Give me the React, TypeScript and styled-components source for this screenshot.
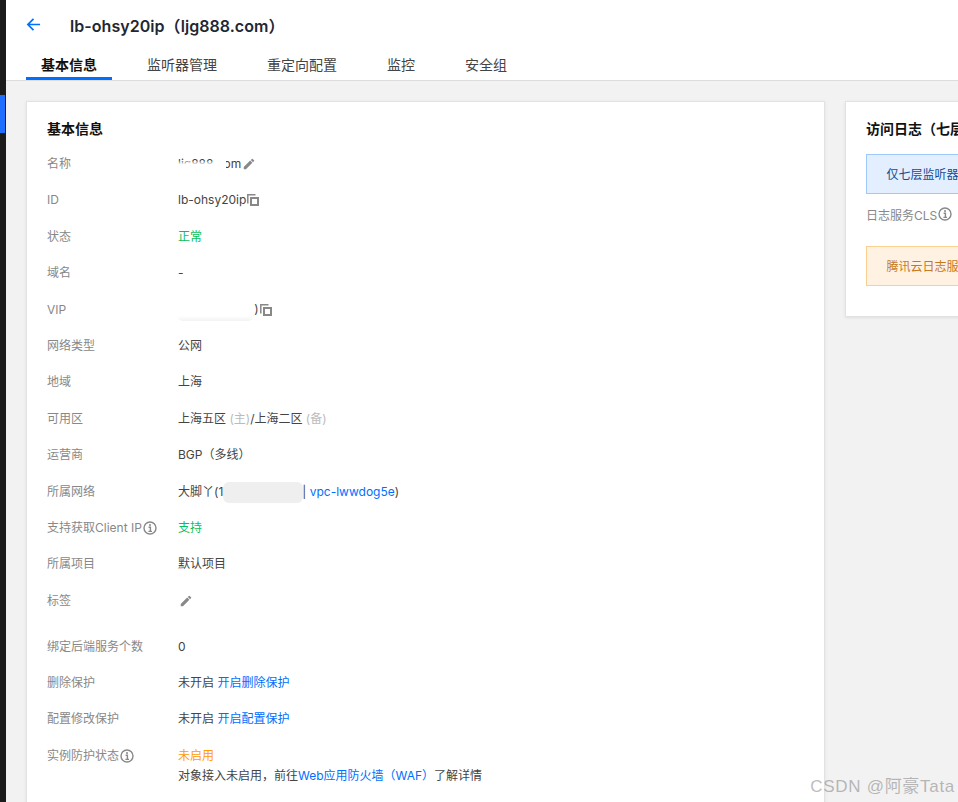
import React from "react";
import styled, { createGlobalStyle } from "styled-components";

const Global = createGlobalStyle`
  html, body { margin: 0; padding: 0; height: 100%; overflow: hidden; background: #f2f2f2; }
  body { font-family: "Inter", "Noto Sans CJK SC", sans-serif; font-size: 12px; color: #444; }
`;

const Shell = styled.div`
  display: flex;
  width: 958px;
  height: 802px;
  overflow: hidden;
  position: relative;
`;
const Sidebar = styled.aside`
  flex: none;
  width: 6px;
  background: #1b1b1b;
  padding-top: 95px;
  box-sizing: border-box;
`;
const SideActive = styled.div`
  height: 38px;
  width: 5px;
  background: #1f6fff;
`;
const Main = styled.main`
  flex: 1;
  min-width: 0;
  display: flex;
  flex-direction: column;
`;
const Header = styled.header`
  background: #fff;
  border-bottom: 1px solid #dcdcdc;
  height: 81px;
  box-sizing: border-box;
  display: flex;
  flex-direction: column;
  flex: none;
`;
const TitleBar = styled.div`
  display: flex;
  align-items: center;
  height: 50px;
  padding-left: 20px;
  padding-bottom: 1px;
  box-sizing: border-box;
`;
const BackIcon = styled.svg`
  width: 15px;
  height: 15px;
  margin-right: 29px;
  color: #006eff;
`;
const Title = styled.h1`
  margin: 0;
  font-size: 16px;
  font-weight: 600;
  letter-spacing: 0.05px;
  color: #1f2733;
  white-space: nowrap;
`;
const Tabs = styled.nav`
  display: flex;
  gap: 20px;
  padding-left: 20px;
  height: 30px;
`;
const Tab = styled.div<{ $active?: boolean }>`
  padding: 0 15px;
  font-size: 14px;
  line-height: 30px;
  height: 30px;
  box-sizing: border-box;
  color: ${(p) => (p.$active ? "#111" : "#444")};
  font-weight: ${(p) => (p.$active ? 600 : 400)};
  border-bottom: 3px solid ${(p) => (p.$active ? "#006eff" : "transparent")};
`;
const Content = styled.div`
  display: flex;
  align-items: flex-start;
  gap: 20px;
  padding: 20px 0 0 20px;
`;
const Card = styled.section<{ $width: number }>`
  flex: none;
  width: ${(p) => p.$width}px;
  box-sizing: border-box;
  background: #fff;
  border: 1px solid #e2e2e2;
  box-shadow: 0 1px 3px rgba(0, 0, 0, 0.08);
  padding: 18px 20px 19px;
  overflow: hidden;
`;
const CardTitle = styled.h2`
  margin: 0 0 8px;
  font-size: 14px;
  line-height: 18px;
  font-weight: 600;
  color: #111;
  white-space: nowrap;
`;
const Row = styled.div<{ $after?: number }>`
  display: flex;
  align-items: flex-start;
  padding-top: 8px;
  min-height: 36.4px;
  box-sizing: border-box;
  line-height: 20px;
  margin-bottom: ${(p) => p.$after ?? 0}px;
`;
const Label = styled.div`
  flex: none;
  width: 131px;
  color: #888;
  display: flex;
  align-items: center;
  height: 20px;
`;
const Value = styled.div`
  color: #444;
  display: flex;
  flex-wrap: wrap;
  align-items: center;
  min-height: 20px;
`;
const Line = styled.div`
  width: 100%;
  display: flex;
  align-items: center;
  height: 20px;
  white-space: nowrap;
`;
const Ok = styled.span`
  color: #0abf5b;
`;
const Warn = styled.span`
  color: #ff9d00;
`;
const Link = styled.a`
  color: #006eff;
  text-decoration: none;
`;
const Muted = styled.span`
  color: #bbb;
`;
const Masked = styled.span`
  position: relative;
  display: inline-block;
  white-space: nowrap;
`;
const Patch = styled.span<{ $left: number; $width: number; $bg: string }>`
  position: absolute;
  left: ${(p) => p.$left}px;
  width: ${(p) => p.$width}px;
  top: 0;
  bottom: -1px;
  background: ${(p) => p.$bg};
  border-radius: 6px;
`;
const IconSvg = styled.svg<{ $size: number; $ml?: number }>`
  flex: none;
  width: ${(p) => p.$size}px;
  height: ${(p) => p.$size}px;
  margin-left: ${(p) => p.$ml ?? 0}px;
  color: #888;
`;
const Alert = styled.div<{ $tone: "info" | "warn" }>`
  height: 40px;
  width: 700px;
  box-sizing: border-box;
  padding: 0 0 2px 19.5px;
  display: flex;
  align-items: center;
  white-space: nowrap;
  background: ${(p) => (p.$tone === "info" ? "#e3efff" : "#fff2e3")};
  border: 1px solid ${(p) => (p.$tone === "info" ? "#9fc9fb" : "#fbd08f")};
  color: ${(p) => (p.$tone === "info" ? "#144a8f" : "#c6791a")};
`;
const LogRow = styled.div`
  display: flex;
  align-items: center;
  color: #888;
  height: 20px;
  margin: 10px 0 22px;
`;
const RightBody = styled.div`
  padding: 8px 0 11px;
`;
const Watermark = styled.div`
  position: absolute;
  right: 3px;
  bottom: 5px;
  font-family: "Liberation Sans", "Noto Sans CJK SC", sans-serif;
  font-size: 17px;
  letter-spacing: 0.7px;
  color: rgba(120, 120, 120, 0.5);
  white-space: nowrap;
`;

const Pencil = ({ ml = 0 }: { ml?: number }) => (
  <IconSvg $size={14} $ml={ml} viewBox="0 0 24 24" fill="currentColor">
    <path d="M3 17.25V21h3.75L17.81 9.94l-3.75-3.75L3 17.25zM20.71 7.04a1 1 0 0 0 0-1.41l-2.34-2.34a1 1 0 0 0-1.41 0l-1.83 1.83 3.75 3.75 1.83-1.83z" />
  </IconSvg>
);
const Copy = () => (
  <IconSvg $size={12} $ml={1} viewBox="0 0 12 12" fill="none" stroke="currentColor">
    <path d="M0.8 9.5V0.8H8.5" strokeWidth="1.5" />
    <rect x="4" y="4" width="7" height="7" strokeWidth="2" />
  </IconSvg>
);
const Info = () => (
  <IconSvg $size={14} $ml={1} viewBox="0 0 14 14" fill="none" stroke="currentColor">
    <circle cx="7" cy="7" r="6" strokeWidth="1.4" />
    <path d="M5.6 6.2H7.4V10.2M5.4 10.4H9" strokeWidth="1.4" />
    <circle cx="7" cy="3.9" r="1" fill="currentColor" stroke="none" />
  </IconSvg>
);

const tabs = ["基本信息", "监听器管理", "重定向配置", "监控", "安全组"];

export default function App() {
  return (
    <Shell>
      <Global />
      <Sidebar>
        <SideActive />
      </Sidebar>
      <Main>
        <Header>
          <TitleBar>
            <BackIcon viewBox="0 0 16 16" fill="none" stroke="currentColor" strokeWidth="1.8">
              <path d="M15 8H2M8 2L2 8l6 6" />
            </BackIcon>
            <Title>lb-ohsy20ip（ljg888.com）</Title>
          </TitleBar>
          <Tabs>
            {tabs.map((t, i) => (
              <Tab key={t} $active={i === 0}>
                {t}
              </Tab>
            ))}
          </Tabs>
        </Header>
        <Content>
          <Card $width={799}>
            <CardTitle>基本信息</CardTitle>
            <Row>
              <Label>名称</Label>
              <Value>
                <Masked>
                  ljg888.com
                  <Patch $left={-4} $width={18} $bg="linear-gradient(#fff0 0 30%, #ffffff 50%)" />
                  <Patch $left={8} $width={30} $bg="linear-gradient(#fff0 0 30%, #ffffff 50%)" />
                  <Patch $left={36} $width={12} $bg="#fff" />
                </Masked>
                <Pencil ml={1} />
              </Value>
            </Row>
            <Row>
              <Label>ID</Label>
              <Value>
                lb-ohsy20ip
                <Copy />
              </Value>
            </Row>
            <Row>
              <Label>状态</Label>
              <Value>
                <Ok>正常</Ok>
              </Value>
            </Row>
            <Row>
              <Label>域名</Label>
              <Value>-</Value>
            </Row>
            <Row>
              <Label>VIP</Label>
              <Value>
                <Masked>
                  100.100.100.11)
                  <Patch $left={-1} $width={77} $bg="linear-gradient(#fff 75%, #f3f3f3)" />
                </Masked>
                <Copy />
              </Value>
            </Row>
            <Row>
              <Label>网络类型</Label>
              <Value>公网</Value>
            </Row>
            <Row>
              <Label>地域</Label>
              <Value>上海</Value>
            </Row>
            <Row>
              <Label>可用区</Label>
              <Value>
                上海五区&nbsp;<Muted>(主)</Muted>/上海二区&nbsp;<Muted>(备)</Muted>
              </Value>
            </Row>
            <Row>
              <Label>运营商</Label>
              <Value>BGP（多线）</Value>
            </Row>
            <Row>
              <Label>所属网络</Label>
              <Value>
                大脚丫(
                <Masked>
                  10000000000
                  <Patch $left={5} $width={80} $bg="#efefef" />
                </Masked>
                &nbsp;|&nbsp;<Link>vpc-lwwdog5e</Link>)
              </Value>
            </Row>
            <Row>
              <Label>
                支持获取Client IP
                <Info />
              </Label>
              <Value>
                <Ok>支持</Ok>
              </Value>
            </Row>
            <Row>
              <Label>所属项目</Label>
              <Value>默认项目</Value>
            </Row>
            <Row $after={9.6}>
              <Label>标签</Label>
              <Value>
                <Pencil ml={1} />
              </Value>
            </Row>
            <Row>
              <Label>绑定后端服务个数</Label>
              <Value>0</Value>
            </Row>
            <Row>
              <Label>删除保护</Label>
              <Value>
                未开启&nbsp;<Link>开启删除保护</Link>
              </Value>
            </Row>
            <Row>
              <Label>配置修改保护</Label>
              <Value>
                未开启&nbsp;<Link>开启配置保护</Link>
              </Value>
            </Row>
            <Row>
              <Label>
                实例防护状态
                <Info />
              </Label>
              <Value>
                <Line>
                  <Warn>未启用</Warn>
                </Line>
                <Line>
                  对象接入未启用，前往<Link>Web应用防火墙（WAF）</Link>了解详情
                </Line>
              </Value>
            </Row>
            <Row>
              <Label>&nbsp;</Label>
            </Row>
          </Card>
          <Card $width={400}>
            <CardTitle>访问日志（七层）</CardTitle>
            <RightBody>
              <Alert $tone="info">仅七层监听器支持配置访问日志</Alert>
              <LogRow>
                日志服务CLS
                <Info />
              </LogRow>
              <Alert $tone="warn">腾讯云日志服务未开通</Alert>
            </RightBody>
          </Card>
        </Content>
      </Main>
      <Watermark>CSDN @阿豪Tata</Watermark>
    </Shell>
  );
}
